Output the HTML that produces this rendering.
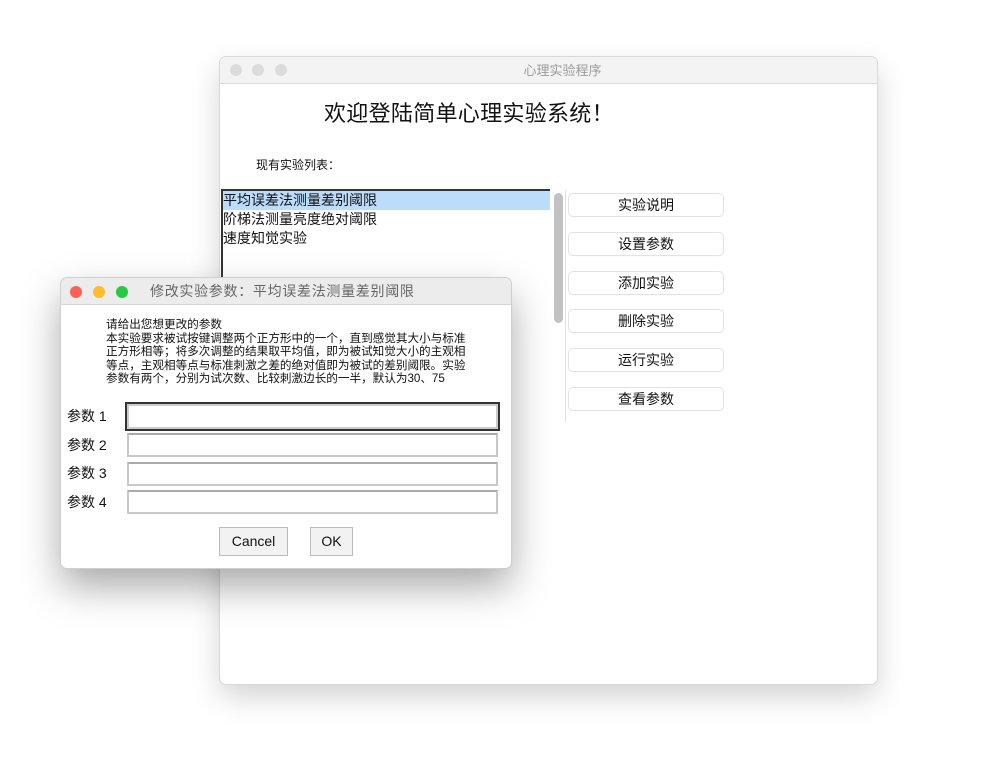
<!DOCTYPE html>
<html><head><meta charset="utf-8"><style>
*{margin:0;padding:0;box-sizing:border-box}
body{width:996px;height:757px;background:#fff;position:relative;overflow:hidden;font-family:"Liberation Sans","Noto Sans CJK SC",sans-serif;color:#111}
.win{position:absolute;left:220px;top:57px;width:657px;height:627px;background:#fff;border-radius:6px;box-shadow:0 0 0 1px #d8d8d8,0 12px 30px rgba(0,0,0,.18)}
.tb{height:27px;background:#f3f3f3;border-bottom:1px solid #ddd;border-radius:6px 6px 0 0;text-align:center;font-size:13px;line-height:27px;color:#9a9a9a;position:relative}
.dot{position:absolute;top:7px;width:12px;height:12px;border-radius:50%}
.abs{position:absolute}
.btn{position:absolute;left:349px;width:154px;height:22px;background:#fff;border-radius:4px;box-shadow:0 0 0 1px #e2e2e2,0 1px 1px rgba(0,0,0,.08);text-align:center;font-size:14px;line-height:22px}
.dlg{position:absolute;left:61px;top:278px;width:450px;height:290px;background:#fff;border-radius:6px;box-shadow:0 0 0 1px #cfcfcf,0 18px 40px rgba(0,0,0,.35)}
.dtb{height:27px;background:#ececec;border-bottom:1px solid #d5d5d5;border-radius:6px 6px 0 0;font-size:14px;letter-spacing:0.7px;line-height:27px;color:#666;padding-left:89px;position:relative}
.lbl{position:absolute;left:6px;font-size:14px}
.ent{position:absolute;left:66px;width:371px;height:24px;border:2px solid #c8c8c8;border-top-color:#aaa;background:#fff}
.b2{position:absolute;top:249px;height:29px;border:1px solid #bbb;background:#f2f2f2;font-size:14px;text-align:center;line-height:27px}
</style></head><body>
<div class="win">
 <div class="tb">
  <div class="dot" style="left:10px;background:#dcdcdc"></div>
  <div class="dot" style="left:32px;background:#dcdcdc"></div>
  <div class="dot" style="left:55px;background:#dcdcdc"></div>
  <span style="position:relative;left:14px">心理实验程序</span>
 </div>
 <div class="abs" style="left:104px;top:39px;font-size:22px;letter-spacing:0.3px">欢迎登陆简单心理实验系统！</div>
 <div class="abs" style="left:36px;top:99px;font-size:12px">现有实验列表：</div>
 <div class="abs" style="left:1px;top:132px;width:329px;height:233px;border-top:2px solid #333;border-left:2px solid #333;font-size:14px;line-height:19px">
  <div style="background:#bcdcfb">平均误差法测量差别阈限</div>
  <div>阶梯法测量亮度绝对阈限</div>
  <div>速度知觉实验</div>
 </div>
 <div class="abs" style="left:334px;top:136px;width:9px;height:130px;background:#c2c2c2;border-radius:5px"></div>
 <div class="abs" style="left:345px;top:133px;width:1px;height:232px;background:#e0e0e0"></div>
 <div class="btn" style="top:137px">实验说明</div>
 <div class="btn" style="top:176px">设置参数</div>
 <div class="btn" style="top:215px">添加实验</div>
 <div class="btn" style="top:253px">删除实验</div>
 <div class="btn" style="top:292px">运行实验</div>
 <div class="btn" style="top:331px">查看参数</div>
</div>
<div class="dlg">
 <div class="dtb">
  <div class="dot" style="left:9px;top:8px;background:#fe5f57"></div>
  <div class="dot" style="left:32px;top:8px;background:#febc2e"></div>
  <div class="dot" style="left:55px;top:8px;background:#28c840"></div>
  修改实验参数：平均误差法测量差别阈限
 </div>
 <div class="abs" style="left:45px;top:40px;font-size:11.6px;line-height:13.6px;width:400px;white-space:nowrap">请给出您想更改的参数<br>本实验要求被试按键调整两个正方形中的一个，直到感觉其大小与标准<br>正方形相等；将多次调整的结果取平均值，即为被试知觉大小的主观相<br>等点，主观相等点与标准刺激之差的绝对值即为被试的差别阈限。实验<br>参数有两个，分别为试次数、比较刺激边长的一半，默认为30、75</div>
 <div class="lbl" style="top:128px">参数 1</div>
 <div class="lbl" style="top:157px">参数 2</div>
 <div class="lbl" style="top:185px">参数 3</div>
 <div class="lbl" style="top:214px">参数 4</div>
 <div class="ent" style="left:64px;top:124px;width:375px;height:29px;border:2px solid #333;box-shadow:inset 0 0 0 2px #ccc"></div>
 <div class="ent" style="top:155px"></div>
 <div class="ent" style="top:184px"></div>
 <div class="ent" style="top:212px"></div>
 <div class="b2" style="left:158px;width:69px">Cancel</div>
 <div class="b2" style="left:249px;width:43px">OK</div>
</div>
</body></html>
